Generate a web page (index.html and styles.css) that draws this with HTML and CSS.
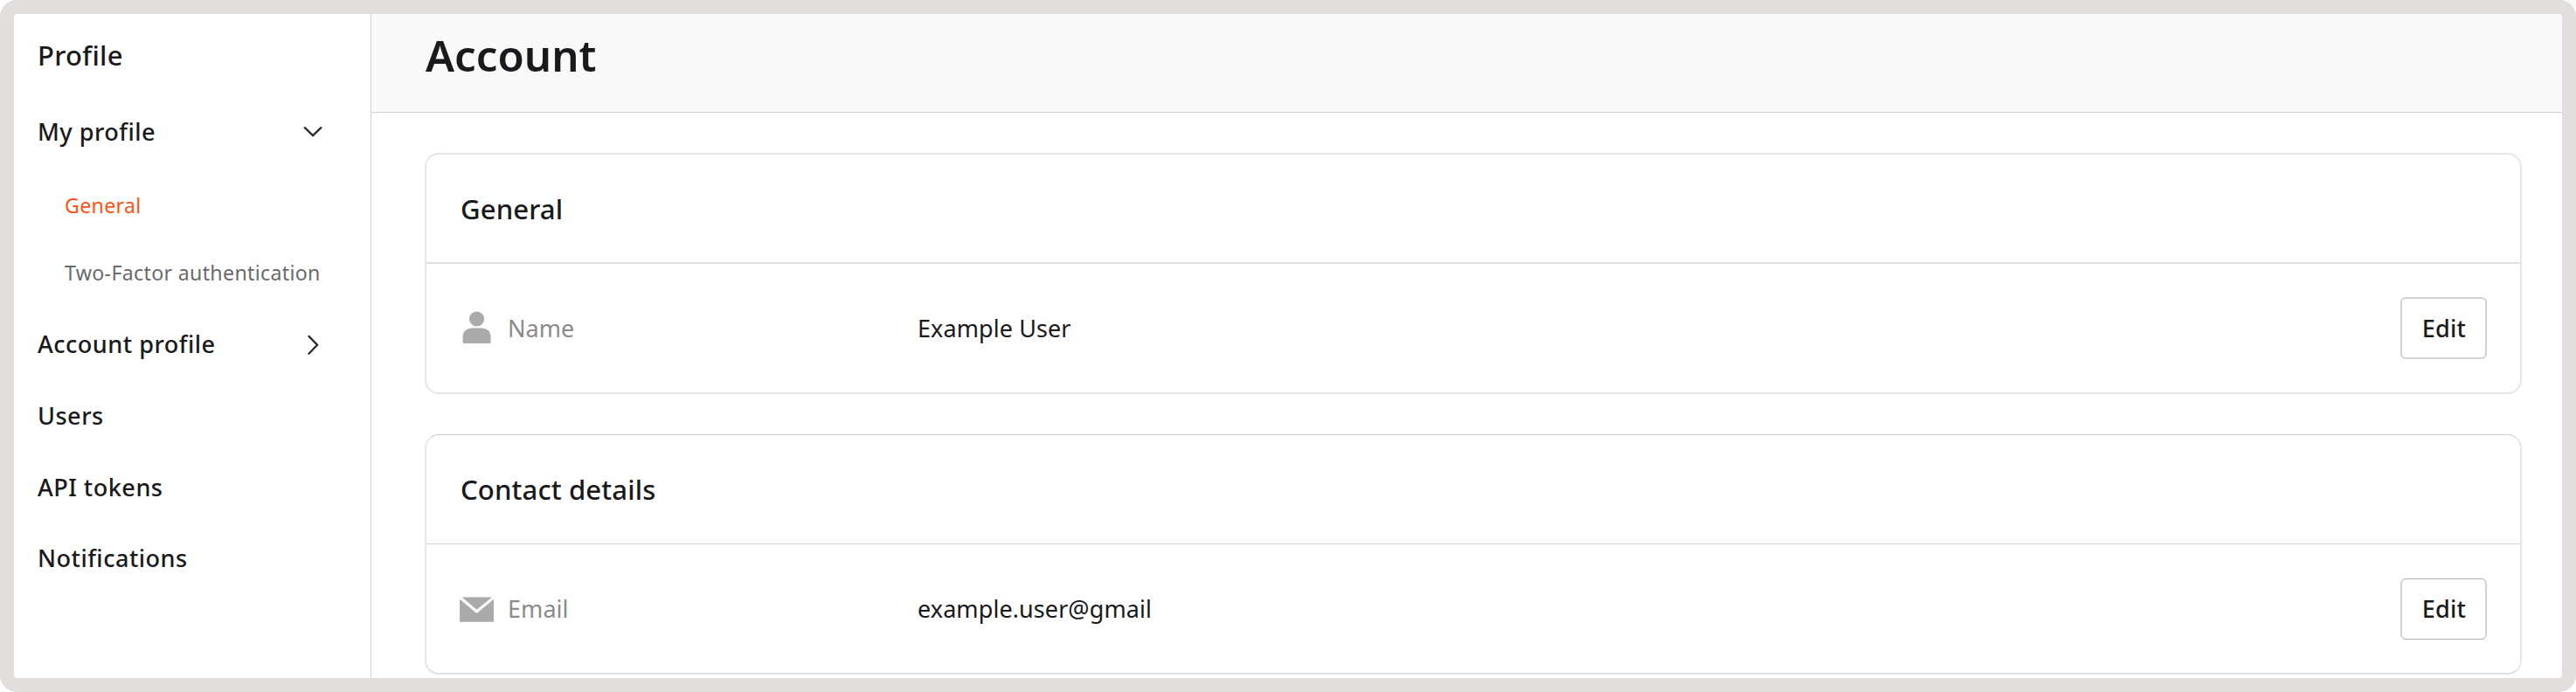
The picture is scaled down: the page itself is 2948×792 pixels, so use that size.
FILE: index.html
```
<!DOCTYPE html>
<html lang="en">
<head>
<meta charset="utf-8">
<title>Account</title>
<link rel="stylesheet" href="styles.css">
</head>
<body>
<div class="frame">
  <div class="app">
    <nav class="sidebar">
      <h2 class="sidebar-title">Profile</h2>
      <a class="nav-item">My profile
        <svg class="chevron" viewBox="0 0 24 24"><path d="M2.8 7.2 12.1 16.2 21.4 7.2"/></svg>
      </a>
      <div class="subnav">
        <a class="subnav-item active">General</a>
        <a class="subnav-item">Two-Factor authentication</a>
      </div>
      <a class="nav-item">Account profile
        <svg class="chevron" viewBox="0 0 24 24"><path d="M7.5 2.9 17.1 12.8 7.5 22.7"/></svg>
      </a>
      <a class="nav-item">Users</a>
      <a class="nav-item">API tokens</a>
      <a class="nav-item">Notifications</a>
    </nav>
    <main class="main">
      <header class="page-header"><h1 class="page-title">Account</h1></header>
      <div class="cards">
        <section class="card">
          <h3 class="card-title">General</h3>
          <div class="row">
            <svg class="icon" viewBox="0 0 40 40"><circle cx="19.6" cy="9" r="8.6"/><path d="M13.6 19.6H25.6Q35.6 20.4 35.6 29.5V35.8Q35.6 37.1 34.3 37.1H4.9Q3.6 37.1 3.6 35.8V29.5Q3.6 20.4 13.6 19.6Z"/></svg>
            <span class="label">Name</span>
            <span class="value">Example User</span>
            <button class="edit">Edit</button>
          </div>
        </section>
        <section class="card card-contact">
          <h3 class="card-title">Contact details</h3>
          <div class="row">
            <svg class="icon" viewBox="0 0 40 40"><path d="M2.6 6.4H37.1L19.6 20.8ZM0.1 8.8 19.6 25 39 8.8V34.8H0.1Z"/></svg>
            <span class="label">Email</span>
            <span class="value">example.user@gmail</span>
            <button class="edit">Edit</button>
          </div>
        </section>
      </div>
    </main>
  </div>
</div>
</body>
</html>
```
FILE: styles.css
```
* { box-sizing: border-box; }

body {
  margin: 0;
  background: linear-gradient(90deg, #fff 50%, #f9f9f9 50%) top / 100% 50% no-repeat #fff;
  font-family: "Noto Sans", sans-serif;
  color: #1a1a1c;
}

h1, h2, h3 { margin: 0; }

.frame {
  width: 2948px;
  height: 792px;
  padding: 16px;
  border-radius: 19px;
  background: #e2dedd;
}

.app {
  display: flex;
  height: 760px;
  border-radius: 4px;
  overflow: hidden;
  background: #fff;
}

.sidebar {
  flex: none;
  width: 409px;
  padding-left: 27px;
  border-right: 1px solid #d2d1da;
}

.sidebar-title {
  height: 94px;
  font-size: 31px;
  font-weight: 500;
  line-height: 95px;
  letter-spacing: 0.25px;
}

.nav-item {
  display: flex;
  align-items: center;
  justify-content: space-between;
  height: 81.7px;
  padding-right: 54px;
  font-size: 27.1px;
  font-weight: 500;
  letter-spacing: 0.48px;
}

.chevron {
  width: 24px;
  height: 24px;
  fill: none;
  stroke: #2b2b2d;
  stroke-width: 2.3;
  stroke-linecap: round;
}

.subnav {
  height: 161.3px;
  padding: 5px 0 0 31px;
}

.subnav-item {
  display: block;
  height: 77.5px;
  font-size: 23.2px;
  line-height: 77.5px;
  letter-spacing: 0.31px;
  color: #6a6a6c;
}

.subnav-item.active { color: #ff5316; }

.main { flex: 1; }

.page-header {
  height: 113px;
  padding-left: 62px;
  border-bottom: 1px solid #d2d1da;
  background: #f9f9f9;
}

.page-title {
  font-size: 49.2px;
  font-weight: 600;
  line-height: 93px;
}

.cards {
  display: flex;
  flex-direction: column;
  gap: 46px;
  padding: 46px 46px 0 61px;
}

.card {
  height: 276px;
  border: 2px solid #e6e6e7;
  border-radius: 16px;
}

.card-contact {
  height: 275px;
  border-top: 1px solid #cdcdcf;
  border-bottom-color: #e0e0e2;
}

.card-title {
  height: 125px;
  padding-left: 39px;
  border-bottom: 2px solid #e2e2e6;
  font-size: 31.2px;
  font-weight: 500;
  line-height: 124px;
  letter-spacing: 0.05px;
}

.card-contact .card-title { border-bottom: 1px solid #cfcfd6; }

.row {
  display: flex;
  align-items: center;
  height: 147px;
  padding: 0 38px;
}

.icon {
  flex: none;
  width: 40px;
  height: 40px;
  margin-right: 15px;
  fill: #aaa;
}

.label {
  width: 469px;
  font-size: 27.1px;
  color: #8b8b8d;
}

.value {
  flex: 1;
  font-size: 27.1px;
  letter-spacing: 0.03px;
}

.edit {
  width: 99px;
  height: 71px;
  padding: 0 0 0 1px;
  border: 2px solid #d1d1d2;
  border-radius: 6px;
  background: #fff;
  font: 500 27.1px "Noto Sans", sans-serif;
  letter-spacing: 0.2px;
  color: #1a1a1c;
}

.card-contact .edit {
  height: 70px;
  border-top: 1px solid #aeaeb0;
  border-bottom: 1px solid #aeaeb0;
}
```
